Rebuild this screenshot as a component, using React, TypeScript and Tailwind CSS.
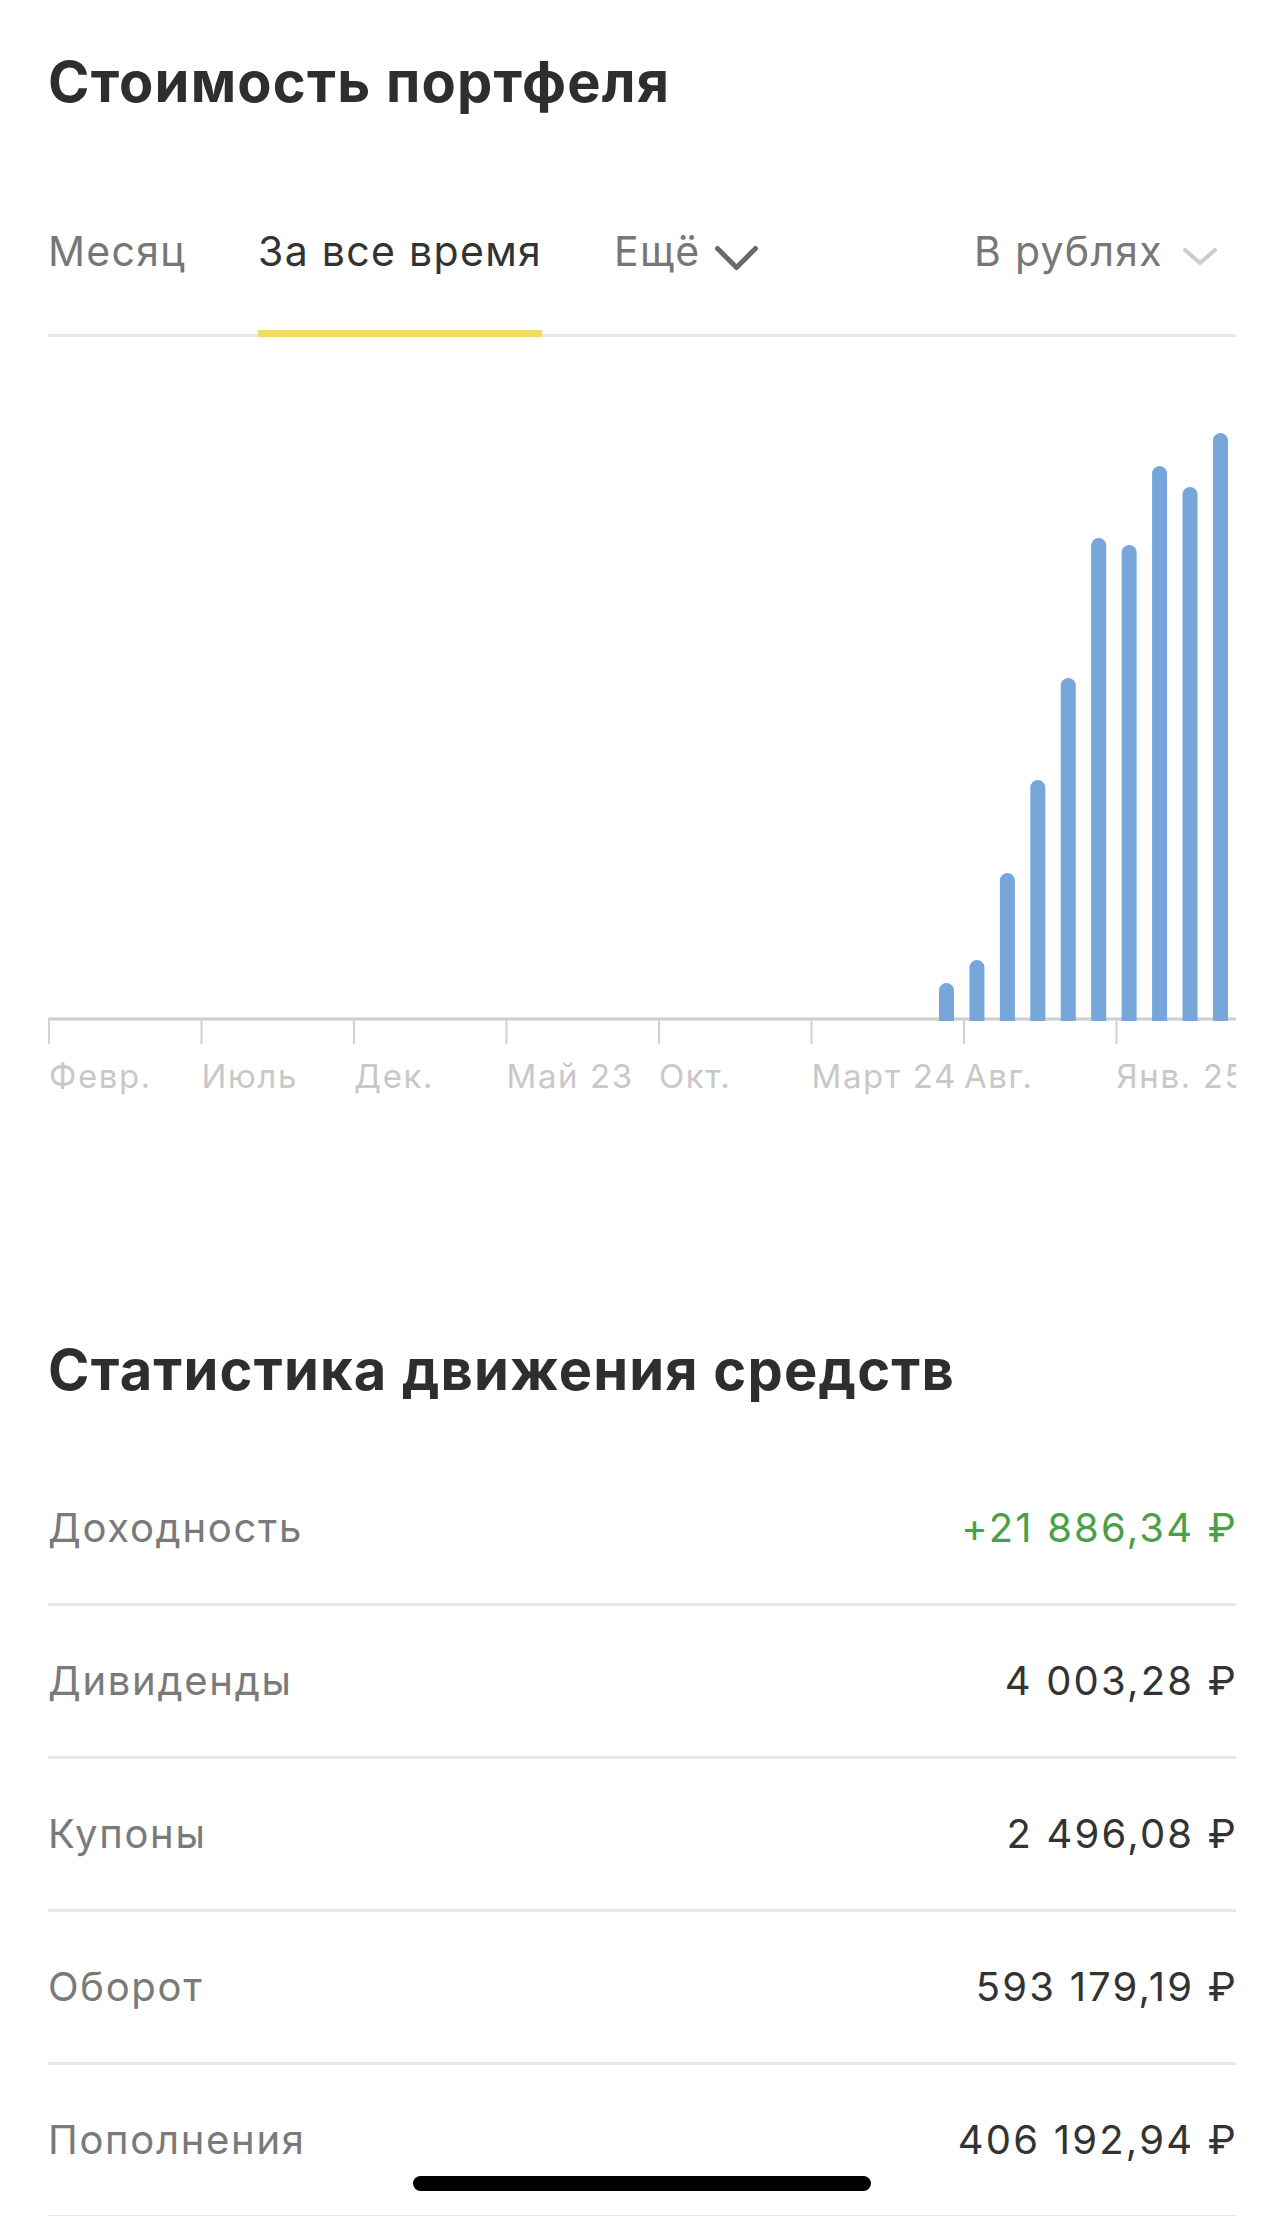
const font = { fontFamily: 'Inter, "Noto Sans", "Liberation Sans", sans-serif' }

const bars = [646, 623, 536, 443, 341, 201, 208, 129, 150, 96]
const labels = ['Февр.', 'Июль', 'Дек.', 'Май 23', 'Окт.', 'Март 24', 'Авг.', 'Янв. 25']

const rows = [
  { label: 'Доходность', value: '+21 886,34 ₽', green: true },
  { label: 'Дивиденды', value: '4 003,28 ₽' },
  { label: 'Купоны', value: '2 496,08 ₽' },
  { label: 'Оборот', value: '593 179,19 ₽' },
  { label: 'Пополнения', value: '406 192,94 ₽' },
]

function Chevron({ className, w, h, sw }: { className: string; w: number; h: number; sw: number }) {
  return (
    <svg width={w} height={h} viewBox={`0 0 ${w} ${h}`} className={className} fill="none">
      <polyline
        points={`${sw / 2 + 1},${sw / 2 + 1} ${w / 2},${h - sw / 2 - 1} ${w - sw / 2 - 1},${sw / 2 + 1}`}
        stroke="currentColor"
        strokeWidth={sw}
        strokeLinecap="round"
        strokeLinejoin="round"
      />
    </svg>
  )
}

function Chart() {
  return (
    <div>
      <svg width={1188} height={708} viewBox="0 0 1188 708" className="block">
        <line x1={0} y1={682} x2={1188} y2={682} stroke="#cdcdcd" strokeWidth={3} />
        {labels.map((_, i) => (
          <line
            key={i}
            x1={1 + 152.5 * i}
            y1={682}
            x2={1 + 152.5 * i}
            y2={707}
            stroke="#d2d2d2"
            strokeWidth={2}
          />
        ))}
        {bars.map((top, i) => {
          const x = 891 + 30.44 * i
          return (
            <path
              key={i}
              d={`M${x},684 V${top + 7.5} A7.5,7.5 0 0 1 ${x + 15},${top + 7.5} V684 Z`}
              fill="#76a6da"
            />
          )
        })}
      </svg>
      <div className="flex overflow-hidden pl-px pt-[11px] text-[33px] leading-[40px] tracking-[1.6px] text-[#c8c8c8]">
        {labels.map((l) => (
          <div key={l} className="w-[152.5px] shrink-0 whitespace-nowrap">
            {l}
          </div>
        ))}
      </div>
    </div>
  )
}

export default function App() {
  return (
    <div className="relative h-[2216px] overflow-hidden bg-white" style={font}>
      <div className="px-12">
        <h1 className="pt-[54px] text-[56px] font-bold leading-none tracking-[1.2px] text-[#2e2e2e]">
          Стоимость портфеля
        </h1>

        <div className="mt-[121px] flex items-start border-b-[3px] border-[#e8e8e8] text-[41px] leading-none tracking-[1.3px]">
          <div className="pb-[58px] text-[#777777]">Месяц</div>
          <div className="ml-[72px] -mb-[3px] border-b-[7px] border-[#f3dc63] pb-[58px] text-[#333333]">
            За все время
          </div>
          <div className="ml-[72px] flex items-start pb-[58px] text-[#777777]">
            <span>Ещё</span>
            <Chevron className="ml-[14px] mt-[14px] text-[#6a6a6a]" w={45} h={26} sw={5} />
          </div>
          <div className="ml-auto mr-[18px] flex items-start pb-[58px] text-[#777777]">
            <span>В рублях</span>
            <Chevron className="ml-[19px] mt-[16px] text-[#cbcbcb]" w={36} h={19} sw={4} />
          </div>
        </div>

        <Chart />

        <h2 className="mt-[246px] text-[56px] font-bold leading-none tracking-[1.2px] text-[#2e2e2e]">
          Статистика движения средств
        </h2>

        <div className="mt-[55px]">
          {rows.map((r) => (
            <div
              key={r.label}
              className="flex h-[153px] items-center justify-between border-b-[3px] border-[#e8e8e8] text-[40px] leading-none"
            >
              <span className="tracking-[1.7px] text-[#7a7a7a]">{r.label}</span>
              <span
                className={`-mr-[2px] tracking-[2.2px] ${
                  r.green ? 'text-[#4a9f48]' : 'text-[#333333]'
                }`}
              >
                {r.value}
              </span>
            </div>
          ))}
        </div>
      </div>

      <div className="absolute left-1/2 top-[2176px] h-[15px] w-[458px] -translate-x-1/2 rounded-full bg-black" />
    </div>
  )
}
